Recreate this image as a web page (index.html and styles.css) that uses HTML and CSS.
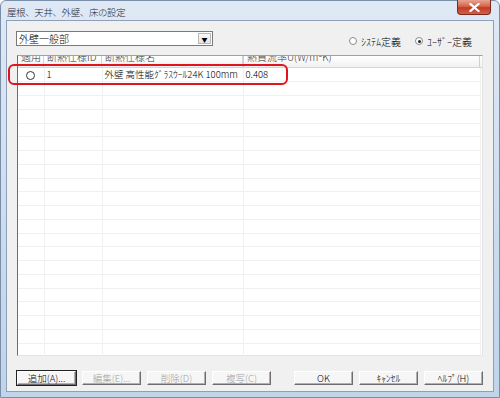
FILE: index.html
```html
<!DOCTYPE html>
<html lang="ja">
<head>
    <meta charset="UTF-8" />
    <title>屋根、天井、外壁、床の設定</title>
    <link rel="stylesheet" href="styles.css">
</head>
<body>
    <!-- ダイアログ -->
    <div class="window">
        <div class="titlebar">
            <span class="title">屋根、天井、外壁、床の設定</span>
            <span class="close-btn">
                <svg width="11" height="9" viewBox="0 0 11 9">
                    <path d="M1.5 1 L9.5 8 M9.5 1 L1.5 8" stroke="#fff" stroke-width="2.2" stroke-linecap="square" />
                </svg>
            </span>
        </div>
        <div class="client">
            <div class="top-row">
                <div class="combo">
                    <span class="combo-text">外壁一般部</span>
                    <span class="combo-btn">▼</span>
                </div>
                <div class="radios">
                    <label class="radio"><span class="radio-mark"></span>ｼｽﾃﾑ定義</label>
                    <label class="radio"><span class="radio-mark checked"></span>ﾕｰｻﾞｰ定義</label>
                </div>
            </div>

            <div class="listview">
                <div class="list-header">
                    <div class="hcell col-1"><span>適用</span></div>
                    <div class="hcell col-2"><span>断熱仕様ID</span></div>
                    <div class="hcell col-3"><span>断熱仕様名</span></div>
                    <div class="hcell col-4"><span>熱貫流率U(W/m²K)</span></div>
                </div>
                <table class="list-table">
                    <colgroup>
                        <col class="col-1" /><col class="col-2" /><col class="col-3" /><col class="col-4" />
                    </colgroup>
                    <tr>
                        <td class="center"><span class="radio-mark big"></span></td>
                        <td>1</td>
                        <td>外壁 高性能ｸﾞﾗｽｳｰﾙ24K 100mm</td>
                        <td>0.408</td>
                    </tr>
                    <tr><td></td><td></td><td></td><td></td></tr>
                    <tr><td></td><td></td><td></td><td></td></tr>
                    <tr><td></td><td></td><td></td><td></td></tr>
                    <tr><td></td><td></td><td></td><td></td></tr>
                    <tr><td></td><td></td><td></td><td></td></tr>
                    <tr><td></td><td></td><td></td><td></td></tr>
                    <tr><td></td><td></td><td></td><td></td></tr>
                    <tr><td></td><td></td><td></td><td></td></tr>
                    <tr><td></td><td></td><td></td><td></td></tr>
                    <tr><td></td><td></td><td></td><td></td></tr>
                    <tr><td></td><td></td><td></td><td></td></tr>
                    <tr><td></td><td></td><td></td><td></td></tr>
                    <tr><td></td><td></td><td></td><td></td></tr>
                    <tr><td></td><td></td><td></td><td></td></tr>
                    <tr><td></td><td></td><td></td><td></td></tr>
                    <tr><td></td><td></td><td></td><td></td></tr>
                    <tr><td></td><td></td><td></td><td></td></tr>
                    <tr><td></td><td></td><td></td><td></td></tr>
                    <tr><td></td><td></td><td></td><td></td></tr>
                    <tr><td></td><td></td><td></td><td></td></tr>
                </table>
                <!-- 注目枠 -->
                <div class="highlight"></div>
            </div>

            <div class="button-row">
                <div class="btn-group">
                    <button type="button" class="btn default">追加(A)...</button>
                    <button type="button" class="btn" disabled>編集(E)...</button>
                    <button type="button" class="btn" disabled>削除(D)</button>
                    <button type="button" class="btn" disabled>複写(C)</button>
                </div>
                <div class="btn-group">
                    <button type="button" class="btn">OK</button>
                    <button type="button" class="btn">ｷｬﾝｾﾙ</button>
                    <button type="button" class="btn">ﾍﾙﾌﾟ(H)</button>
                </div>
            </div>
        </div>
    </div>
</body>
</html>
```

FILE: styles.css
```css
* {
    box-sizing:border-box;
}
body {
    margin:0;
    background:#fff;
    font-family:"Noto Sans CJK JP", "Noto Sans", sans-serif;
    font-size:10px;
    font-weight:300;
    color:#000;
}
.window {
    position:relative;
    width:500px;
    height:398px;
    padding:0 5px 6px 5px;
    background:linear-gradient(to bottom, #dfe9f5 0%, #cbdbee 60%, #c0d4ea 100%);
    border:1px solid #7a8ea8;
    border-radius:6px 6px 0 0;
}
.titlebar {
    position:relative;
    height:19px;
    padding:3px 0 0 1px;
}
.title {
    font-size:9.5px;
    letter-spacing:-0.4px;
    color:#1e2a38;
}
.close-btn {
    position:absolute;
    top:-1px;
    right:3px;
    width:34px;
    height:15px;
    display:flex;
    align-items:center;
    justify-content:center;
    background:linear-gradient(to bottom, #e8a593 0%, #d7644c 45%, #c23b23 55%, #d0604a 100%);
    border:1px solid #7d2a1c;
    border-top:none;
    border-radius:0 0 4px 4px;
}
.client {
    height:372px;
    padding:10px 0 0 9px;
    background:#f0f0f0;
    border:1px solid #8ea0b8;
}
.top-row {
    display:flex;
    justify-content:space-between;
    height:15px;
}
.combo {
    display:flex;
    width:197px;
    height:15px;
    background:#fff;
    border:1px solid #7a7a7a;
}
.combo-text {
    flex:1;
    padding-left:2px;
    line-height:13px;
}
.combo-btn {
    width:13px;
    margin:1px;
    font-size:6px;
    line-height:11px;
    text-align:center;
    background:linear-gradient(to bottom, #fafafa, #e4e4e4);
    border:1px solid #b8b8b8;
}
.radios {
    display:flex;
    gap:14px;
    padding:5px 21px 0 0;
}
.radio {
    display:flex;
    align-items:center;
    gap:4px;
    line-height:11px;
}
.radio-mark {
    position:relative;
    display:inline-block;
    width:8px;
    height:8px;
    border:1px solid #8a8a8a;
    border-radius:50%;
    background:#fff;
}
.radio-mark.checked:after {
    content:'';
    position:absolute;
    top:1.5px;
    left:1.5px;
    width:3px;
    height:3px;
    border-radius:50%;
    background:#222;
}
.radio-mark.big {
    width:9px;
    height:9px;
    border-color:#333;
    vertical-align:middle;
}
.listview {
    position:relative;
    width:466px;
    height:301px;
    margin:9px 0 0 1px;
    background:#fff;
    border-top:1px solid #a0a0a0;
    border-left:1px solid #6d6d6d;
    border-right:1px solid #e3e3e3;
    border-bottom:1px solid #e3e3e3;
}
.list-header {
    display:flex;
    height:12px;
    overflow:hidden;
    background:linear-gradient(to bottom, #fff, #f1f1f1);
    border-bottom:1px solid #d5d5d5;
}
.hcell {
    height:12px;
    padding-left:3px;
    border-right:1px solid #d5d5d5;
    overflow:hidden;
    white-space:nowrap;
    color:#333;
}
.hcell span {
    display:block;
    margin-top:-6px;
    line-height:14px;
}
.hcell.col-4 {
    border:1px solid #cfcfcf;
    border-top:none;
}
.col-1 { width:26px; }
.col-2 { width:58px; }
.col-3 { width:141px; }
.col-4 { width:237px; }
.list-table {
    width:462px;
    table-layout:fixed;
    border-collapse:collapse;
    font-size:9.5px;
}
.list-table td {
    height:13.75px;
    padding:0 0 0 2px;
    line-height:13px;
    white-space:nowrap;
    border-bottom:1px solid #f0f0f0;
    border-right:1px solid #f0f0f0;
}
.list-table td.center {
    padding:0;
    text-align:center;
}
.highlight {
    position:absolute;
    top:8px;
    left:-10px;
    width:280px;
    height:21px;
    border:2px solid #e0141e;
    border-radius:6px;
}
.button-row {
    display:flex;
    justify-content:space-between;
    width:466px;
    margin:15px 0 0 1px;
}
.btn-group {
    display:flex;
    gap:6px;
}
.btn {
    width:59px;
    height:14px;
    padding:0;
    font-family:"Noto Sans CJK JP", "Noto Sans", sans-serif;
    font-size:9.5px;
    font-weight:300;
    line-height:12px;
    color:#000;
    background:#f6f6f6;
    border:1px solid;
    border-color:#fff #6d6d6d #6d6d6d #fff;
    box-shadow:inset -1px -1px 0 #b0b0b0;
}
.btn.default {
    outline:1px solid #222;
}
.btn:disabled {
    color:#a0a0a0;
}
```
